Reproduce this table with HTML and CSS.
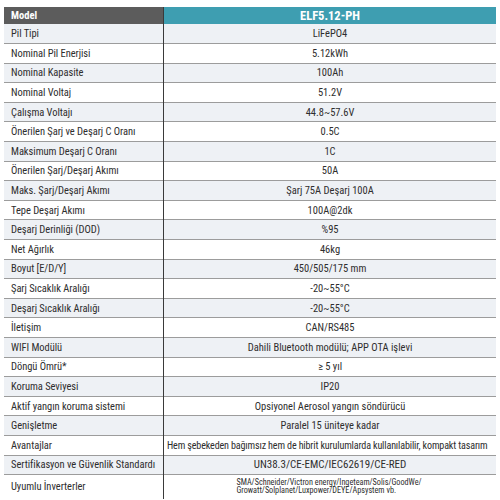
FILE: index.html
```html
<!DOCTYPE html>
<html lang="tr">
<head>
    <meta charset="UTF-8">
    <meta name="viewport" content="width=device-width, initial-scale=1.0">
    <title>ELF5.12-PH Teknik Özellikler</title>
    <link rel="stylesheet" href="styles.css">
</head>
<body>
    <table class="spec">
        <thead>
            <tr>
                <th class="key">Model</th>
                <th class="val">ELF5.12-PH</th>
            </tr>
        </thead>
        <tbody>
            <tr><td class="key">Pil Tipi</td><td class="val">LiFePO4</td></tr>
            <tr><td class="key">Nominal Pil Enerjisi</td><td class="val">5.12kWh</td></tr>
            <tr><td class="key">Nominal Kapasite</td><td class="val">100Ah</td></tr>
            <tr><td class="key">Nominal Voltaj</td><td class="val">51.2V</td></tr>
            <tr><td class="key">Çalışma Voltajı</td><td class="val">44.8~57.6V</td></tr>
            <tr><td class="key">Önerilen Şarj ve Deşarj C Oranı</td><td class="val">0.5C</td></tr>
            <tr><td class="key">Maksimum Deşarj C Oranı</td><td class="val">1C</td></tr>
            <tr><td class="key">Önerilen Şarj/Deşarj Akımı</td><td class="val">50A</td></tr>
            <tr><td class="key">Maks. Şarj/Deşarj Akımı</td><td class="val">Şarj 75A Deşarj 100A</td></tr>
            <tr><td class="key">Tepe Deşarj Akımı</td><td class="val">100A@2dk</td></tr>
            <tr><td class="key">Deşarj Derinliği (DOD)</td><td class="val">%95</td></tr>
            <tr><td class="key">Net Ağırlık</td><td class="val">46kg</td></tr>
            <tr><td class="key">Boyut [E/D/Y]</td><td class="val">450/505/175 mm</td></tr>
            <tr><td class="key">Şarj Sıcaklık Aralığı</td><td class="val">-20~55°C</td></tr>
            <tr><td class="key">Deşarj Sıcaklık Aralığı</td><td class="val">-20~55°C</td></tr>
            <tr><td class="key">İletişim</td><td class="val">CAN/RS485</td></tr>
            <tr><td class="key">WIFI Modülü</td><td class="val">Dahili Bluetooth modülü; APP OTA işlevi</td></tr>
            <tr><td class="key">Döngü Ömrü*</td><td class="val">≥ 5 yıl</td></tr>
            <tr><td class="key">Koruma Seviyesi</td><td class="val">IP20</td></tr>
            <tr><td class="key">Aktif yangın koruma sistemi</td><td class="val">Opsiyonel Aerosol yangın söndürücü</td></tr>
            <tr><td class="key">Genişletme</td><td class="val">Paralel 15 üniteye kadar</td></tr>
            <tr><td class="key">Avantajlar</td><td class="val long">Hem şebekeden bağımsız hem de hibrit kurulumlarda kullanılabilir, kompakt tasarım</td></tr>
            <tr><td class="key">Sertifikasyon ve Güvenlik Standardı</td><td class="val big">UN38.3/CE-EMC/IEC62619/CE-RED</td></tr>
            <tr class="last">
                <td class="key">Uyumlu İnverterler</td>
                <td class="val"><span class="small">SMA/Schneider/Victron energy/Ingeteam/Solis/GoodWe/<br>Growatt/Solplanet/Luxpower/DEYE/Apsystem vb.</span></td>
            </tr>
        </tbody>
    </table>
</body>
</html>
```

FILE: styles.css
```css
body {
    margin: 0;
    padding: 7px 4px 0 4px;
    background-color: #ffffff;
    font-family: "Liberation Sans Narrow", "Roboto Condensed", "DejaVu Sans Condensed", Roboto, sans-serif;
    color: #2e2e2e;
}
.spec {
    width: 492px;
    border-collapse: collapse;
    table-layout: fixed;
}
.spec th, .spec td {
    padding: 0;
    white-space: nowrap;
    overflow: hidden;
}
.spec thead th {
    height: 17px;
    color: #ffffff;
    font-weight: bold;
}
.spec th.key {
    width: 152px;
    background-color: #5c5c5c;
    text-align: left;
    padding-left: 7px;
    font-size: 10.5px;
    border-right: 1px solid #3a3a3a;
}
.spec th.val {
    background-color: #3e9eb1;
    font-size: 12.5px;
    text-align: center;
}
.spec tbody tr {
    height: 19.6px;
    border-bottom: 1px solid #9c9c9c;
}
.spec tbody tr:nth-child(odd) {
    background-color: #eef1f5;
}
.spec tbody tr:nth-child(even) {
    background-color: #ffffff;
}
.spec td.key {
    padding-left: 7px;
    font-size: 10.5px;
    letter-spacing: -0.05px;
    border-right: 1px solid #3a3a3a;
}
.spec td.val {
    text-align: center;
    font-size: 10.5px;
}
.spec td.long {
    text-align: left;
    padding-left: 3px;
    font-size: 10.1px;
    letter-spacing: -0.15px;
}
.spec td.big {
    font-size: 11px;
}
.spec tr.last {
    height: 24px;
    border-bottom: none;
}
.small {
    display: inline-block;
    text-align: left;
    font-size: 8.2px;
    line-height: 8.5px;
    margin-left: -2px;
}
```
